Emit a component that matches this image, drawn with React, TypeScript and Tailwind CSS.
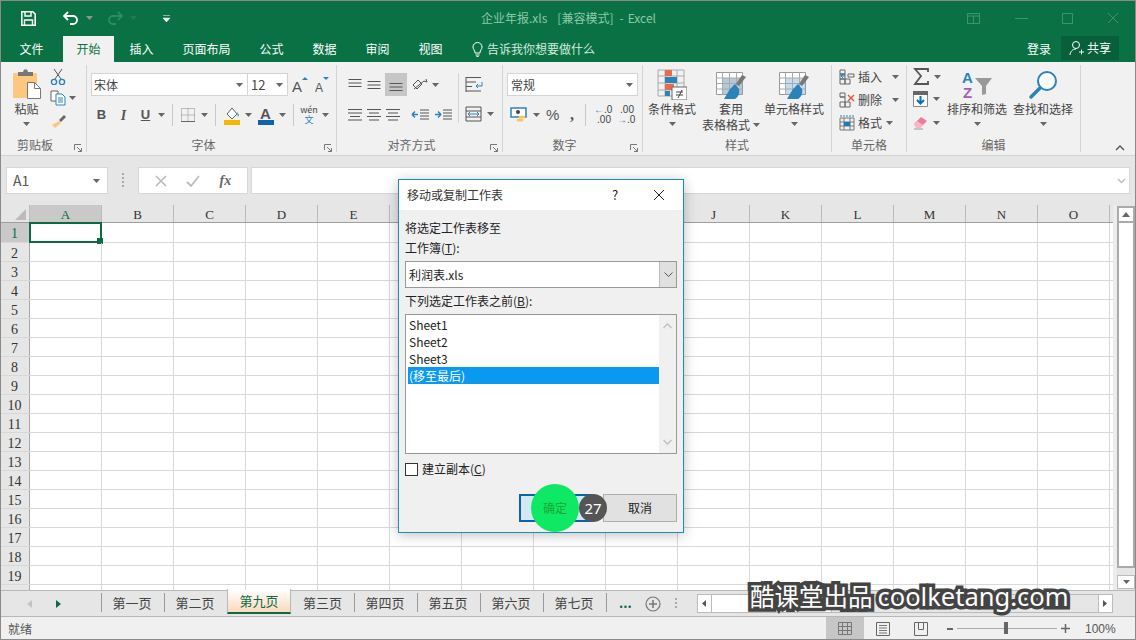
import type { ReactNode } from "react";

const font = "font-['Noto_Sans_CJK_SC','Noto_Sans',sans-serif]";

const columns = ["A", "B", "C", "D", "E", "F", "G", "H", "I", "J", "K", "L", "M", "N", "O"];
const rows = Array.from({ length: 20 }, (_, i) => i + 1);
const sheets = ["第一页", "第二页", "第九页", "第三页", "第四页", "第五页", "第六页", "第七页"];
const tabs = [
  { name: "文件", w: "w-[63px]" },
  { name: "开始", w: "w-[51px]", active: true },
  { name: "插入", w: "w-[55px]" },
  { name: "页面布局", w: "w-[75px]" },
  { name: "公式", w: "w-[55px]" },
  { name: "数据", w: "w-[51px]" },
  { name: "审阅", w: "w-[55px]" },
  { name: "视图", w: "w-[51px]" },
];

function Caret({ className = "" }: { className?: string }) {
  return (
    <svg width="7" height="4" viewBox="0 0 7 4" className={`shrink-0 ${className}`}>
      <path d="M0 0h7L3.5 4z" fill="#666" />
    </svg>
  );
}

function Icon({ w = 20, h = 20, children, className = "" }: { w?: number; h?: number; children: ReactNode; className?: string }) {
  return (
    <svg width={w} height={h} viewBox={`0 0 ${w} ${h}`} fill="none" className={`shrink-0 ${className}`}>
      {children}
    </svg>
  );
}

function Launcher() {
  return (
    <Icon w={8} h={8} className="absolute right-[4px] bottom-0">
      <path d="M.5 6V.5H7M7.5 7.5L3 3M7.5 4v3.5H4" stroke="#777" />
    </Icon>
  );
}

function Sep({ className = "" }: { className?: string }) {
  return <div className={`h-[22px] w-px shrink-0 bg-[#c8c8c8] ${className}`} />;
}

function Group({ w, label, launcher, children }: { w: string; label: string; launcher?: boolean; children: ReactNode }) {
  return (
    <div className={`${w} relative flex h-[87px] shrink-0 flex-col border-r border-[#d4d4d4]`}>
      <div className="flex h-[71px] items-start">{children}</div>
      <div className={`relative flex h-[16px] items-center justify-center pt-[2px] text-[12px] text-[#666] ${launcher ? "pr-[16px]" : ""}`}>
        {label}
        {launcher && <Launcher />}
      </div>
    </div>
  );
}

function Lines({ widths, top = 0 }: { widths: number[]; top?: number }) {
  return (
    <Icon w={16} h={16}>
      {widths.map((w, i) => (
        <path key={i} d={`M${(16 - w) / 2} ${top + 2.5 + i * 3.5}h${w}`} stroke="#555" />
      ))}
    </Icon>
  );
}

function Paste() {
  return (
    <Icon w={28} h={30}>
      <rect x="0" y="4" width="24" height="25" rx="1" fill="#fcc77f" />
      <path d="M5 7V3h5l1-2.500h3l1 2.500h5v4z" fill="#777" />
      <path d="M14.500 13.500h7l6 6v10h-13z" fill="#fff" stroke="#777" />
      <path d="M21.500 13.500v6h6" stroke="#777" />
    </Icon>
  );
}

function TableStyleIcon({ tone }: { tone: string }) {
  return (
    <Icon w={32} h={30}>
      <path d="M1.500 2.500h26v22h-26z" fill="#fff" stroke="#999" />
      <path d="M7 8h20v16H7z" fill={tone} />
      <path d="M1.500 8h26M1.500 13.500h26M1.500 19h26M7.500 2.500v22M14.500 2.500v22M21.500 2.500v22" stroke="#aaa" />
      <path d="M31 7l-7 9-3-2 6-9z" fill="#777" />
      <path d="M20 14c-2 2-3 3-5 5l-6 10h11c3-2 5-5 4-10z" fill="#2b83b7" />
    </Icon>
  );
}

function LabelledIcon({ w, icon, text, caretInline }: { w: string; icon: ReactNode; text: ReactNode; caretInline?: boolean }) {
  return (
    <div className={`${w} flex shrink-0 flex-col items-center pt-[4px]`}>
      <div className="flex h-[31px] items-center">{icon}</div>
      <div className="mt-[1px] text-center text-[12px] leading-[16px] whitespace-nowrap text-[#444]">{text}</div>
      {!caretInline && <Caret className="mt-[5px]" />}
    </div>
  );
}

function ButtonRow({ icon, text, caret }: { icon: ReactNode; text: string; caret: string }) {
  return (
    <div className="flex h-[23px] items-center">
      {icon}
      <span className="ml-[3px] text-[12px] text-[#444]">{text}</span>
      <Caret className={caret} />
    </div>
  );
}

function Ribbon() {
  return (
    <div className="flex h-[94px] shrink-0 border-b border-[#d2d2d2] bg-[#f1f1f1] pt-[3px]">
      <Group w="w-[87px]" label="剪贴板" launcher>
        <div className="flex w-[50px] flex-col items-center pt-[4px] pl-[3px]">
          <Paste />
          <span className="mt-[2px] text-[12px] leading-[16px] text-[#444]">粘贴</span>
          <Caret className="mt-[5px]" />
        </div>
        <div className="flex flex-col gap-[5px] pt-[3px]">
          <Icon w={16} h={17}>
            <path d="M4 1l7 10M12 1L5 11" stroke="#555" />
            <circle cx="4" cy="14" r="2.600" stroke="#2b83b7" strokeWidth="1.400" />
            <circle cx="12" cy="14" r="2.600" stroke="#2b83b7" strokeWidth="1.400" />
          </Icon>
          <div className="flex items-center gap-[3px]">
            <Icon w={16} h={16}>
              <path d="M1 1h7v10H1z" stroke="#666" fill="#fff" />
              <path d="M6 4h6l3 3v8H6z" stroke="#2b83b7" fill="#fff" />
              <path d="M8 8h5M8 10h5M8 12h5" stroke="#2b83b7" />
            </Icon>
            <Caret />
          </div>
          <Icon w={16} h={16} className="mt-[2px]">
            <path d="M9 8l-7 4 3 3 6-5z" fill="#fcc77f" />
            <path d="M9 7l5-5 2 2-5 5z" fill="#666" />
          </Icon>
        </div>
      </Group>

      <Group w="w-[250px]" label="字体" launcher>
        <div className="flex flex-col pt-[8px] pl-[4px]">
          <div className="flex h-[23px] items-center">
            <div className="flex h-[23px] w-[157px] items-center justify-between border border-[#d4d4d4] bg-white pr-[4px] pl-[2px] text-[12px] text-[#444]">
              宋体
              <Caret />
            </div>
            <div className="flex h-[23px] w-[40px] items-center justify-between border border-l-0 border-[#d4d4d4] bg-white pr-[4px] pl-[3px] text-[13px] text-[#444]">
              12
              <Caret />
            </div>
            <div className="ml-[3px] flex items-end gap-[4px]">
              <Icon w={18} h={18}>
                <text x="1" y="16" fontSize="15" fontFamily="Liberation Sans" fill="#555">A</text>
                <path d="M11 4l3-3 3 3z" fill="#2b83b7" />
              </Icon>
              <Icon w={18} h={18}>
                <text x="2" y="16" fontSize="12" fontFamily="Liberation Sans" fill="#555">A</text>
                <path d="M10 1h6l-3 3z" fill="#2b83b7" />
              </Icon>
            </div>
          </div>
          <div className="mt-[9px] flex h-[20px] items-center pl-[3px] text-[#555]">
            <span className="w-[15px] text-center font-['Liberation_Sans'] text-[13px] font-bold">B</span>
            <span className="ml-[7px] w-[15px] text-center font-['Liberation_Serif'] text-[14px] font-bold italic">I</span>
            <span className="ml-[7px] w-[15px] text-center font-['Liberation_Sans'] text-[13px] font-bold underline">U</span>
            <Caret className="ml-[5px]" />
            <Sep className="ml-[7px]" />
            <Icon w={16} h={16} className="ml-[7px]">
              <path d="M1.500 1.500h13v13h-13zM1.500 8h13M8 1.500v13" stroke="#888" strokeDasharray="1 1" />
              <path d="M1 14.500h14" stroke="#666" />
            </Icon>
            <Caret className="ml-[5px]" />
            <Sep className="ml-[7px]" />
            <Icon w={16} h={20} className="ml-[8px]">
              <path d="M3 9l5-6 5 6-5 5z" fill="#fff" stroke="#666" />
              <path d="M13 7l2 3-1 2z" fill="#2b83b7" />
              <path d="M0 15h16v5H0z" fill="#f7b500" />
            </Icon>
            <Caret className="ml-[5px]" />
            <Icon w={16} h={20} className="ml-[6px]">
              <text x="2" y="14" fontSize="15" fontFamily="Liberation Sans" fontWeight="bold" fill="#555">A</text>
              <path d="M0 15h16v5H0z" fill="#0f62ae" />
            </Icon>
            <Caret className="ml-[5px]" />
            <Sep className="ml-[7px]" />
            <div className="ml-[7px] flex w-[16px] flex-col items-center text-[9px] leading-[10px]">
              <span className="text-[#444]">wén</span>
              <span className="text-[#2b83b7]">文</span>
            </div>
            <Caret className="ml-[5px]" />
          </div>
        </div>
      </Group>

      <Group w="w-[166px]" label="对齐方式" launcher>
        <div className="flex pt-[8px] pl-[10px]">
          <div className="flex w-[107px] flex-col">
            <div className="flex h-[23px] items-center gap-[3px]">
              <Lines widths={[13, 13, 13]} />
              <Lines widths={[13, 13, 13]} top={2} />
              <div className="flex h-[23px] w-[22px] items-center justify-center bg-[#c6c6c6]">
                <Lines widths={[13, 13, 13]} top={4} />
              </div>
              <Icon w={20} h={16} className="ml-[1px]">
                <path d="M3 12L13 4M2 8l5-5 4 4-5 5zM13 4l3 1-1-3" stroke="#555" />
              </Icon>
              <Caret className="-ml-[2px]" />
            </div>
            <div className="mt-[9px] flex h-[20px] items-center gap-[3px]">
              <Lines widths={[14, 14, 10, 14]} />
              <Lines widths={[14, 10, 14, 10]} />
              <Lines widths={[14, 10, 14, 10]} />
              <Icon w={20} h={16} className="ml-[7px]">
                <path d="M9 3h9M9 6h9M9 9h9M9 12h9" stroke="#555" />
                <path d="M1 7.500h6M1 7.500l3-3M1 7.500l3 3" stroke="#2b83b7" strokeWidth="1.500" />
              </Icon>
              <Icon w={20} h={16}>
                <path d="M9 3h9M9 6h9M9 9h9M9 12h9" stroke="#555" />
                <path d="M1 7.500h6M7 7.500l-3-3M7 7.500l-3 3" stroke="#2b83b7" strokeWidth="1.500" />
              </Icon>
            </div>
          </div>
          <div className="ml-[4px] h-[50px] w-px bg-[#d4d4d4]" />
          <div className="ml-[6px] flex flex-col pt-[1px]">
            <Icon w={18} h={18} className="mt-[2px]">
              <path d="M1 1.500h15M1 6h10M1 10.500h6M1 15h15M1 1v15" stroke="#555" />
              <path d="M17 6v4h-6m2-2l-2 2 2 2" stroke="#2b83b7" />
            </Icon>
            <div className="mt-[12px] flex items-center gap-[5px]">
              <Icon w={17} h={16}>
                <path d="M1 1h15v14H1zM1 5h15M1 11h15" stroke="#555" />
                <path d="M3 8h11M3 8l2-2M3 8l2 2M14 8l-2-2M14 8l-2 2" stroke="#2b83b7" />
              </Icon>
              <Caret />
            </div>
          </div>
        </div>
      </Group>

      <Group w="w-[140px]" label="数字" launcher>
        <div className="flex flex-col pt-[8px] pl-[4px]">
          <div className="flex h-[23px] w-[131px] items-center justify-between border border-[#d4d4d4] bg-white pr-[4px] pl-[3px] text-[12px] text-[#444]">
            常规
            <Caret />
          </div>
          <div className="mt-[9px] flex h-[20px] items-center pl-[3px]">
            <Icon w={18} h={18}>
              <path d="M1 2h15v9H1z" fill="#fff" stroke="#2b83b7" strokeWidth="1.500" />
              <circle cx="8" cy="6" r="2" fill="#444" />
              <ellipse cx="12" cy="11" rx="3.500" ry="1.600" fill="#f7c469" />
              <ellipse cx="10" cy="14" rx="3.500" ry="1.600" fill="#f7c469" />
            </Icon>
            <Caret className="ml-[5px]" />
            <span className="ml-[6px] w-[16px] font-['Liberation_Sans'] text-[15px] text-[#555]">%</span>
            <span className="ml-[8px] font-['Liberation_Serif'] text-[16px] font-bold text-[#555]">,</span>
            <div className="ml-[11px] h-[22px] w-px bg-[#c8c8c8]" />
            <div className="ml-[8px] flex w-[17px] flex-col font-['Liberation_Sans'] text-[10px] leading-[10px] text-[#444]">
              <span className="text-right">
                <span className="text-[#2b83b7]">←</span>.0
              </span>
              <span className="text-right">.00</span>
            </div>
            <div className="ml-[6px] flex w-[17px] flex-col font-['Liberation_Sans'] text-[10px] leading-[10px] text-[#444]">
              <span className="text-right">.00</span>
              <span className="text-right">
                <span className="text-[#2b83b7]">→</span>.0
              </span>
            </div>
          </div>
        </div>
      </Group>

      <Group w="w-[189px]" label="样式">
        <LabelledIcon
          w="w-[58px]"
          icon={
            <Icon w={30} h={31}>
              <path d="M1 1h26v26H1zM1 7h26M1 14h26M1 21h26M8 1v26M20 1v26" stroke="#aaa" />
              <path d="M8 1h7v6H8z" fill="#ec6a4c" />
              <path d="M8 8h12v6H8z" fill="#2b83b7" />
              <path d="M8 15h9v6H8z" fill="#ec6a4c" />
              <path d="M8 22h5v5H8z" fill="#2b83b7" />
              <path d="M15 18h15v13H15z" fill="#fff" stroke="#666" />
              <path d="M19 23h7M19 26h7M25 21l-4 8" stroke="#444" />
            </Icon>
          }
          text="条件格式"
        />
        <LabelledIcon
          w="w-[60px]"
          icon={<TableStyleIcon tone="#b4c8da" />}
          text={
            <>
              套用
              <br />
              <span className="inline-flex items-center gap-[3px]">
                表格格式
                <Caret />
              </span>
            </>
          }
          caretInline
        />
        <LabelledIcon w="w-[66px]" icon={<TableStyleIcon tone="#c4dcf0" />} text="单元格样式" />
      </Group>

      <Group w="w-[75px]" label="单元格">
        <div className="flex flex-col pl-[7px]">
          <ButtonRow
            text="插入"
            caret="ml-[10px]"
            icon={
              <Icon w={16} h={16}>
                <path d="M1 1h5v4H1zM1 5h5v5H1zM1 10h5v5H1zM6 10h5v5H6zM9 5h6v3H9z" stroke="#666" />
                <path d="M1 6h5M6 7H2m2-2L2 7l2 2" stroke="#2b83b7" />
              </Icon>
            }
          />
          <ButtonRow
            text="删除"
            caret="ml-[10px]"
            icon={
              <Icon w={16} h={16}>
                <path d="M1 1h5v4H1zM1 10h5v5H1zM6 10h5v5H6zM1 5h5v5" stroke="#666" />
                <path d="M9 3l6 6M15 3L9 9" stroke="#e4553b" strokeWidth="1.400" />
              </Icon>
            }
          />
          <ButtonRow
            text="格式"
            caret="ml-[4px]"
            icon={
              <Icon w={16} h={16}>
                <path d="M1 3h14v12H1zM1 7h14M1 11h14M5 3v12M11 3v12" stroke="#777" />
                <path d="M5 7h6v4H5z" fill="#1a7ab8" />
                <path d="M1 1h14" stroke="#2b83b7" strokeDasharray="2 1" />
              </Icon>
            }
          />
        </div>
      </Group>

      <Group w="w-[174px]" label="编辑">
        <div className="flex w-[37px] shrink-0 flex-col gap-[6px] pt-[3px] pl-[6px]">
          <div className="flex items-center gap-[5px]">
            <Icon w={16} h={17}>
              <path d="M15 4V1H2l6 7-6 8h13v-3" stroke="#555" strokeWidth="1.800" />
            </Icon>
            <Caret />
          </div>
          <div className="flex items-center gap-[5px]">
            <Icon w={15} h={16}>
              <path d="M.5.5h14v15H.5z" stroke="#888" fill="#fff" />
              <path d="M0 0h15v4H0z" fill="#666" />
              <path d="M7.500 5v7M4 9l3.500 3.500L11 9" stroke="#0f6db3" strokeWidth="2" />
            </Icon>
            <Caret />
          </div>
          <div className="mt-[2px] flex items-center gap-[4px]">
            <Icon w={16} h={15}>
              <path d="M1 9l7-7 6 4-7 7z" fill="#f57a9a" />
              <path d="M1 9l3-3 6 4-3 3H3z" fill="#f9b6c6" />
              <path d="M1 14h9" stroke="#999" />
            </Icon>
            <Caret />
          </div>
        </div>
        <LabelledIcon
          w="w-[66px]"
          icon={
            <Icon w={32} h={32}>
              <text x="1" y="14" fontSize="15" fontFamily="Liberation Sans" fontWeight="bold" fill="#2b83b7">A</text>
              <text x="2" y="29" fontSize="15" fontFamily="Liberation Sans" fontWeight="bold" fill="#a060b0">Z</text>
              <path d="M14 9h17l-6 8v8l-4 1v-9z" fill="#999" />
            </Icon>
          }
          text="排序和筛选"
        />
        <LabelledIcon
          w="w-[66px]"
          icon={
            <Icon w={30} h={30}>
              <circle cx="19" cy="11" r="9" fill="#fff" stroke="#2b83b7" strokeWidth="2" />
              <path d="M12 18L3 27" stroke="#2b83b7" strokeWidth="3.500" strokeLinecap="round" />
            </Icon>
          }
          text="查找和选择"
        />
      </Group>

      <div className="relative flex-1">
        <Icon w={10} h={6} className="absolute top-[80px] right-[11px]">
          <path d="M1 5l4-4 4 4" stroke="#555" strokeWidth="1.400" />
        </Icon>
      </div>
    </div>
  );
}

function FormulaBar() {
  return (
    <div className="flex h-[49px] shrink-0 items-start bg-[#e6e6e6] pt-[11px] pl-[6px]">
      <div className="flex h-[27px] w-[102px] items-center justify-between border border-[#d6d6d6] bg-white pr-[7px] pl-[6px] text-[14px] text-[#555]">
        A1
        <Caret />
      </div>
      <div className="flex w-[30px] justify-center pt-[6px]">
        <div className="flex flex-col gap-[2px]">
          <span className="h-[2px] w-[2px] bg-[#aaa]" />
          <span className="h-[2px] w-[2px] bg-[#aaa]" />
          <span className="h-[2px] w-[2px] bg-[#aaa]" />
          <span className="h-[2px] w-[2px] bg-[#aaa]" />
        </div>
      </div>
      <div className="flex h-[27px] w-[110px] items-center justify-around border border-[#d6d6d6] bg-white px-[6px]">
        <Icon w={12} h={12}>
          <path d="M1 1l10 10M11 1L1 11" stroke="#bbb" strokeWidth="1.600" />
        </Icon>
        <Icon w={14} h={12}>
          <path d="M1 7l4 4 8-10" stroke="#bbb" strokeWidth="1.800" />
        </Icon>
        <span className="font-['Liberation_Serif'] text-[14px] font-bold text-[#666] italic">fx</span>
      </div>
      <div className="ml-[3px] flex h-[27px] w-[879px] items-center justify-end border border-[#d6d6d6] bg-white pr-[3px]">
        <Icon w={9} h={6}>
          <path d="M1 1l3.500 3.500L8 1" stroke="#bbb" strokeWidth="1.400" />
        </Icon>
      </div>
    </div>
  );
}

function Sheet() {
  return (
    <div className="flex min-h-0 flex-1 bg-[#ececec]">
      <div className="w-[1113px] shrink-0 overflow-hidden bg-white">
        <div className="flex h-[18px] border-b border-[#9e9e9e] bg-[#e6e6e6]">
          <div className="relative w-[30px] shrink-0 border-r border-[#bbb]">
            <div className="absolute right-[3px] bottom-[2px] h-0 w-0 border-b-[11px] border-l-[11px] border-b-[#bbb] border-l-transparent" />
          </div>
          {columns.map((c, i) => (
            <div
              key={c}
              className={`flex w-[72px] shrink-0 items-center justify-center border-r border-[#bbb] pt-[2px] font-['Liberation_Serif'] text-[13px] ${
                i === 0 ? "bg-[#c9c9c9] text-[#0a6b42]" : "text-[#333]"
              }`}
            >
              {c}
            </div>
          ))}
        </div>
        {rows.map((r) => (
          <div key={r} className={`flex ${r === 1 ? "h-[20px]" : "h-[19px]"} border-b border-[#d8d8d8]`}>
            <div
              className={`flex w-[30px] shrink-0 items-center justify-center border-r border-[#a8a8a8] pt-[2px] font-['Liberation_Serif'] text-[14px] ${
                r === 1 ? "bg-[#c9c9c9] text-[#0a6b42]" : "bg-[#e6e6e6] text-[#333]"
              }`}
            >
              {r === 20 ? "" : r}
            </div>
            {columns.map((c, i) => (
              <div key={c} className="relative w-[72px] shrink-0 border-r border-[#d8d8d8]">
                {r === 1 && i === 0 && (
                  <div className="absolute -top-px -left-px h-[21px] w-[73px] border-2 border-[#0a6b42]">
                    <span className="absolute -right-[3px] -bottom-[3px] h-[6px] w-[6px] bg-[#0a6b42]" />
                  </div>
                )}
              </div>
            ))}
          </div>
        ))}
      </div>
      <div className="ml-[4px] flex w-[18px] shrink-0 flex-col bg-[#e6e6e6] pt-[1px]">
        <div className="flex h-[17px] items-center justify-center border-2 border-[#aaa] bg-white">
          <Icon w={8} h={5}>
            <path d="M0 5h8L4 0z" fill="#666" />
          </Icon>
        </div>
        <div className="h-[345px] border-x-2 border-b-2 border-[#aaa] bg-white" />
        <div className="mt-auto mb-[1px] flex h-[14px] items-center justify-center border border-[#bbb] bg-white">
          <Caret />
        </div>
      </div>
    </div>
  );
}

function SheetTabs() {
  return (
    <div className="flex h-[27px] shrink-0 items-start border-y border-[#b8b8b8] bg-[#e6e6e6]">
      <div className="flex h-[25px] w-[101px] shrink-0 items-center pl-[27px]">
        <Icon w={5} h={8}>
          <path d="M5 0v8L0 4z" fill="#c4c4c4" />
        </Icon>
        <Icon w={5} h={8} className="ml-[24px]">
          <path d="M0 0v8l5-4z" fill="#0a6b42" />
        </Icon>
      </div>
      {sheets.map((s, i) => (
        <div
          key={s}
          className={
            i === 2
              ? "-mt-[2px] flex h-[25px] w-[64px] shrink-0 items-center justify-center border-x border-[#b8b8b8] border-b-2 border-b-[#0a6b42] bg-gradient-to-b from-white to-[#fbd9bd] text-[13px] text-[#0a6b42]"
              : `mt-[2px] flex h-[19px] w-[63px] shrink-0 items-center justify-center text-[13px] text-[#444] ${
                  i === 0 || i === 1 || i > 3 ? "border-l border-[#999] pr-[2px]" : ""
                }`
          }
        >
          {s}
        </div>
      ))}
      <div className="mt-[2px] flex h-[19px] items-center border-l border-[#999] pl-[12px] text-[13px] leading-none font-bold text-[#0a6b42]">
        ...
      </div>
      <Icon w={16} h={16} className="mt-[5px] ml-[13px]">
        <circle cx="8" cy="8" r="7" stroke="#777" strokeWidth="1.200" />
        <path d="M8 4v8M4 8h8" stroke="#777" strokeWidth="1.600" />
      </Icon>
      <div className="mt-[7px] ml-[14px] flex flex-col gap-[2px]">
        <span className="h-[2px] w-[2px] bg-[#aaa]" />
        <span className="h-[2px] w-[2px] bg-[#aaa]" />
        <span className="h-[2px] w-[2px] bg-[#aaa]" />
      </div>
      <div className="mt-[3px] ml-[20px] flex h-[19px] w-[416px] items-center border border-[#bbb] bg-[#e6e6e6]">
        <div className="flex h-full w-[14px] items-center justify-center border-r border-[#bbb] bg-white">
          <Icon w={4} h={7}>
            <path d="M4 0v7L0 3.500z" fill="#555" />
          </Icon>
        </div>
        <div className="h-full w-[120px] border-r border-[#bbb] bg-white" />
        <div className="flex-1" />
        <div className="flex h-full w-[14px] items-center justify-center border-l border-[#bbb] bg-white">
          <Icon w={4} h={7}>
            <path d="M0 0v7l4-3.500z" fill="#555" />
          </Icon>
        </div>
      </div>
    </div>
  );
}

function StatusBar() {
  return (
    <div className="flex h-[23px] shrink-0 items-center bg-[#f0f0f0] pl-[8px] text-[12px] text-[#555]">
      <span>就绪</span>
      <div className="mr-[14px] ml-auto flex h-full items-center">
        <div className="flex h-full w-[38px] items-center justify-center bg-[#c6c6c6]">
          <Icon w={14} h={13}>
            <path d="M.5.5h13v12H.5zM.5 4.500h13M.5 8.500h13M4.500.5v12M9.500.5v12" stroke="#777" />
          </Icon>
        </div>
        <div className="flex w-[38px] justify-center">
          <Icon w={14} h={14}>
            <path d="M.5.5h13v13H.5z" stroke="#666" />
            <path d="M3 3.500h8M3 6h8M3 8.500h8M3 11h8" stroke="#777" />
          </Icon>
        </div>
        <div className="flex w-[38px] justify-center">
          <Icon w={14} h={14}>
            <path d="M.5.5h13v13H.5zM4.500.5v7h5v-7" stroke="#666" />
          </Icon>
        </div>
        <span className="ml-[7px] h-[2px] w-[6px] bg-[#666]" />
        <div className="relative ml-[4px] h-px w-[100px] bg-[#aaa]">
          <span className="absolute top-[-6px] left-[47px] h-[12px] w-[4px] bg-[#666]" />
        </div>
        <Icon w={9} h={9} className="ml-[4px]">
          <path d="M4.500 0v9M0 4.500h9" stroke="#666" strokeWidth="1.500" />
        </Icon>
        <span className="ml-[15px] w-[37px] font-['Liberation_Sans'] text-[12px]">100%</span>
      </div>
    </div>
  );
}

function Dialog() {
  return (
    <div className="absolute top-[179px] left-[398px] flex h-[354px] w-[286px] flex-col border border-[#1d8cb3] bg-[#f0f0f0] text-[12px] text-[#222] shadow-[0_2px_12px_rgba(0,0,0,0.25)]">
      <div className="flex h-[30px] shrink-0 items-center bg-white pl-[8px]">
        <span className="w-[200px] text-[#333]">移动或复制工作表</span>
        <span className="w-[16px] text-center text-[13px]">?</span>
        <Icon w={12} h={12} className="ml-[30px]">
          <path d="M1 1l10 10M11 1L1 11" stroke="#222" />
        </Icon>
      </div>
      <div className="flex flex-1 flex-col px-[6px]">
        <div className="mt-[9px] leading-[18px]">将选定工作表移至</div>
        <div className="mt-[2px] leading-[18px]">
          工作簿(<span className="underline">T</span>):
        </div>
        <div className="mt-[4px] flex h-[27px] w-[272px] items-center border border-[#999] bg-white pl-[3px]">
          <span className="flex-1">利润表.xls</span>
          <div className="flex h-full w-[17px] items-center justify-center border-l border-[#bbb] bg-[#e0e0e0]">
            <Icon w={9} h={6}>
              <path d="M.5.5l4 4 4-4" stroke="#555" />
            </Icon>
          </div>
        </div>
        <div className="mt-[4px] leading-[18px]">
          下列选定工作表之前(<span className="underline">B</span>):
        </div>
        <div className="mt-[4px] flex h-[140px] w-[272px] border border-[#999] bg-white pt-px pl-[2px]">
          <div className="flex flex-1 flex-col leading-[17px]">
            <span className="pl-px">Sheet1</span>
            <span className="pl-px">Sheet2</span>
            <span className="pl-px">Sheet3</span>
            <span className="bg-[#0a99f0] pl-px text-white">(移至最后)</span>
          </div>
          <div className="-mt-px flex w-[17px] flex-col items-center justify-between bg-[#f0f0f0] py-[8px]">
            <Icon w={9} h={6}>
              <path d="M.5 5l4-4 4 4" stroke="#c0c0c0" strokeWidth="1.400" />
            </Icon>
            <Icon w={9} h={6}>
              <path d="M.5 1l4 4 4-4" stroke="#c0c0c0" strokeWidth="1.400" />
            </Icon>
          </div>
        </div>
        <div className="mt-[6px] flex items-center gap-[4px]">
          <span className="h-[13px] w-[13px] border border-[#333] bg-white" />
          <span>
            建立副本(<span className="underline">C</span>)
          </span>
        </div>
        <div className="mt-[16px] flex justify-end gap-[10px]">
          <div className="flex h-[28px] w-[74px] items-center justify-center border-2 border-[#0a64ad] bg-[#d5e7f5]">确定</div>
          <div className="flex h-[28px] w-[74px] items-center justify-center border border-[#adadad] bg-[#e1e1e1]">取消</div>
        </div>
      </div>
    </div>
  );
}

export default function App() {
  return (
    <div className={`${font} relative flex h-[640px] w-[1136px] flex-col overflow-hidden bg-[#e6e6e6]`}>
      <div className="relative flex h-[36px] shrink-0 items-center bg-[#0a7145] pl-[21px]">
        <Icon w={15} h={15}>
          <path d="M.8.8h11l2.400 2.400v11H.8z" stroke="#fff" strokeWidth="1.600" />
          <path d="M4 1v4h6V1M3.500 14V9h8v5" stroke="#fff" strokeWidth="1.400" />
        </Icon>
        <Icon w={16} h={14} className="ml-[27px]">
          <path d="M5 1L1 5l4 4M1 5h9a4 4 0 0 1 0 8H7" stroke="#fff" strokeWidth="1.800" />
        </Icon>
        <Caret className="ml-[7px] opacity-90 invert" />
        <Icon w={16} h={14} className="ml-[14px] opacity-30">
          <path d="M11 1l4 4-4 4M15 5H6a4 4 0 0 0 0 8h3" stroke="#7fc9a8" strokeWidth="1.800" />
        </Icon>
        <Caret className="ml-[7px] opacity-20 invert" />
        <Icon w={7} h={7} className="ml-[26px]">
          <path d="M0 .5h7M0 3h7L3.500 7z" fill="#fff" stroke="#fff" strokeWidth=".5" />
        </Icon>
        <div className="absolute left-[481px] flex text-[12px] whitespace-nowrap text-[#8cc9aa]">
          <span>企业年报.xls</span>
          <span className="ml-[10px]">[兼容模式]</span>
          <span className="ml-[6px]">-</span>
          <span className="ml-[4px]">Excel</span>
        </div>
        <div className="absolute right-[17px] flex items-center gap-[33px]">
          <Icon w={13} h={11} className="mr-[1px] opacity-40">
            <path d="M.5.5h12v10H.5zM.5 3h12M6.500 3v7.500" stroke="#8cc9aa" />
          </Icon>
          <Icon w={13} h={3} className="mx-[1px] opacity-40">
            <path d="M0 1.500h13" stroke="#8cc9aa" />
          </Icon>
          <Icon w={11} h={11} className="opacity-40">
            <path d="M.5.5h10v10H.5z" stroke="#8cc9aa" />
          </Icon>
          <Icon w={12} h={12} className="ml-[1px] opacity-40">
            <path d="M1 1l10 10M11 1L1 11" stroke="#8cc9aa" />
          </Icon>
        </div>
      </div>

      <div className="flex h-[26px] shrink-0 bg-[#0a7145] text-[12px] text-white">
        {tabs.map((t) => (
          <div
            key={t.name}
            className={`${t.w} flex shrink-0 items-center justify-center ${t.active ? "bg-[#f1f1f1] text-[#0a7145]" : ""}`}
          >
            {t.name}
          </div>
        ))}
        <div className="ml-[16px] flex items-center gap-[4px] text-[#d4eadf]">
          <Icon w={11} h={15}>
            <path d="M3 11c0-3-2-3.500-2-6a4.500 4.500 0 0 1 9 0c0 2.500-2 3-2 6zM3.500 13h4M4.500 14.500h2" stroke="#fff" />
          </Icon>
          告诉我你想要做什么
        </div>
        <div className="ml-auto flex items-center">
          <span className="mr-[10px]">登录</span>
          <div className="mr-[17px] flex h-[24px] w-[58px] items-center justify-center gap-[2px] self-start bg-[#07603a]">
            <Icon w={16} h={16}>
              <circle cx="7" cy="5" r="3.500" stroke="#fff" />
              <path d="M1 15c0-3 2.500-6 6-6M10 12h5M12.500 9.500v5" stroke="#fff" />
            </Icon>
            共享
          </div>
        </div>
      </div>

      <Ribbon />
      <FormulaBar />
      <Sheet />
      <SheetTabs />
      <StatusBar />

      <Dialog />

      <div className="absolute top-[484px] left-[531px] flex h-[48px] w-[48px] items-center justify-center rounded-full bg-[#0fe865] text-[12px] text-[#17a82f]">
        确定
      </div>
      <div className="absolute top-[494px] left-[579px] flex h-[28px] w-[28px] items-center justify-center rounded-full bg-[#555] font-['Noto_Sans'] text-[15px] text-white">
        27
      </div>

      <div className="absolute top-[578px] left-[750px] flex items-center gap-[5px] leading-[36px] whitespace-nowrap text-white [-webkit-text-stroke:7px_#444] [paint-order:stroke_fill]">
        <span className="text-[24.5px]">酷课堂出品</span>
        <span className="font-['Noto_Sans'] text-[25.5px]">coolketang.com</span>
      </div>

      <div className="pointer-events-none absolute inset-0 border border-[#8a8a8a]" />
    </div>
  );
}
